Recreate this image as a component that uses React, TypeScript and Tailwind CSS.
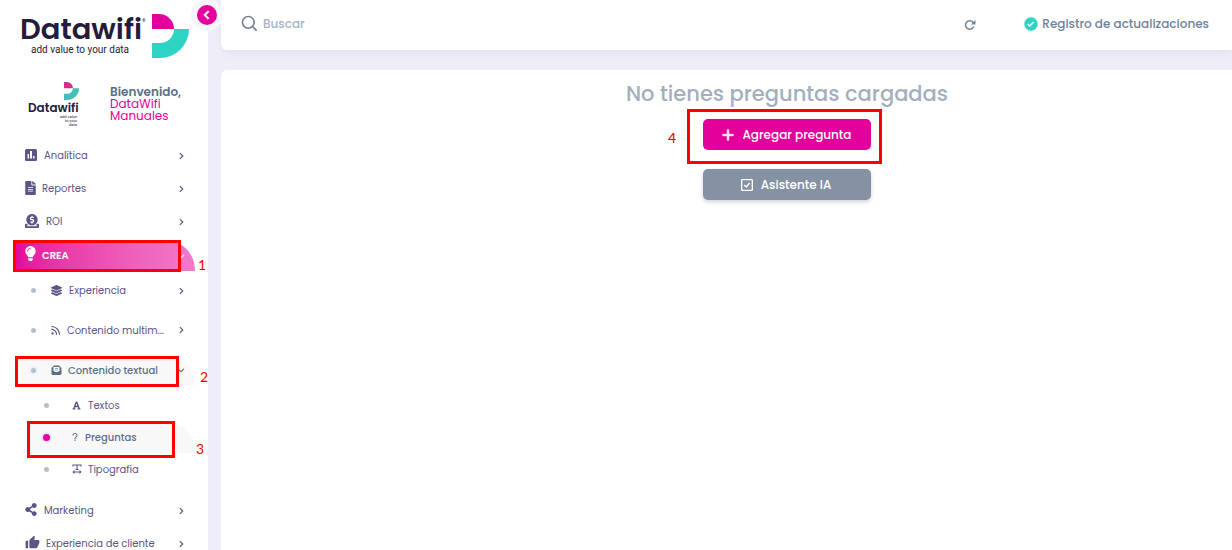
import React, { useState } from "react";
import {
  BiCheckSquare,
  BiChevronDown,
  BiChevronLeft,
  BiChevronRight,
  BiPlus,
  BiQuestionMark,
  BiRss,
  BiSearch,
  BiSolidCheckCircle,
} from "react-icons/bi";
import {
  FaDonate,
  FaFileAlt,
  FaFont,
  FaLayerGroup,
  FaLightbulb,
  FaShareAlt,
} from "react-icons/fa";
import { MdThumbUp } from "react-icons/md";

interface IconProps {
  className?: string;
}

interface NavItem {
  title: string;
  icon: React.ComponentType<IconProps>;
  iconClass: string;
}

const ChartIcon: React.FC<IconProps> = ({ className }) => (
  <svg viewBox="0 0 24 24" className={className} aria-hidden="true">
    <rect width="24" height="24" rx="3" fill="currentColor" />
    <path d="M5 10H8V19H5ZM10 4H14V19H10ZM16 14H19V19H16Z" fill="#fff" />
  </svg>
);

const LetterIcon: React.FC<IconProps> = ({ className }) => (
  <svg viewBox="0 0 22 20" className={className} aria-hidden="true">
    <path d="M1 6L6 1H16L21 6V17A3 3 0 0 1 18 20H4A3 3 0 0 1 1 17Z" fill="currentColor" />
    <path d="M5 4H17V11L14 14H8L5 11Z" fill="#fff" />
    <path d="M8 7H14M8 10H14" stroke="currentColor" strokeWidth="1.2" />
  </svg>
);

const TextWidthIcon: React.FC<IconProps> = ({ className }) => (
  <svg
    viewBox="0 0 20 20"
    className={className}
    fill="none"
    stroke="currentColor"
    strokeWidth="2.2"
    aria-hidden="true"
  >
    <path d="M2 5V2H18V5M10 2V11M7 11H13M2 16H18" />
    <path d="M5 12L1 16L5 20ZM15 12L19 16L15 20Z" fill="currentColor" stroke="none" />
  </svg>
);

const ReloadIcon: React.FC<IconProps> = ({ className }) => (
  <svg viewBox="0 0 24 24" className={className} aria-hidden="true">
    <path
      d="M19.5 15A8.5 8.5 0 1 1 18 6.5L20 9"
      fill="none"
      stroke="currentColor"
      strokeWidth="3"
    />
    <path d="M23 2V11H14Z" fill="currentColor" />
  </svg>
);

const topItems: NavItem[] = [
  { title: "Analítica", icon: ChartIcon, iconClass: "h-3 w-3 mr-[7px]" },
  { title: "Reportes", icon: FaFileAlt, iconClass: "h-3.5 w-[11px] mr-1.5" },
  { title: "ROI", icon: FaDonate, iconClass: "h-3.5 w-3.5 mr-[7px]" },
];

const bottomItems: NavItem[] = [
  { title: "Marketing", icon: FaShareAlt, iconClass: "h-[13px] w-3 mr-[7px]" },
  { title: "Experiencia de cliente", icon: MdThumbUp, iconClass: "h-[15px] w-[15px] mr-1.5" },
];

const BrandMark: React.FC<{ className: string; pink: string; teal: string }> = ({
  className,
  pink,
  teal,
}) => (
  <svg viewBox="0 0 37 44" className={className} aria-hidden="true">
    <path d="M0 0H7A15 15 0 0 1 22 15H0Z" fill={pink} />
    <path d="M22 15H37A29 29 0 0 1 8 44H0V29H8A14 14 0 0 0 22 15Z" fill={teal} />
  </svg>
);

// numbered red frame drawn over a control
const Marker: React.FC<{ n: number; box: string; label: string }> = ({ n, box, label }) => (
  <>
    <span className={`pointer-events-none absolute z-10 border-3 border-[#ff0000] ${box}`} />
    <span
      className={`pointer-events-none absolute z-10 font-[Lato,sans-serif] text-[14px] leading-4 text-[#f00000] ${label}`}
    >
      {n}
    </span>
  </>
);

const TopLink: React.FC<{ item: NavItem }> = ({ item }) => {
  const Icon = item.icon;
  return (
    <li>
      <a href="#" className="flex h-[33px] items-center pr-5 pl-[25px]">
        <Icon className={`mb-0.5 shrink-0 ${item.iconClass}`} />
        <span className="flex-1">{item.title}</span>
        <BiChevronRight size={14} />
      </a>
    </li>
  );
};

const Sidebar: React.FC = () => {
  const [open, setOpen] = useState<boolean>(true);

  return (
    <aside className="relative w-52 shrink-0 bg-white text-[10px] text-[#5d5386]">
      <button
        type="button"
        aria-label="Contraer menú"
        onClick={() => setOpen(!open)}
        className="absolute -top-px -right-[15px] z-20 flex size-8 items-center justify-center rounded-full bg-[#f5f5fb]"
      >
        <span className="flex size-5 items-center justify-center rounded-full bg-[#e4009b] text-white">
          <BiChevronLeft size={18} strokeWidth={1} />
        </span>
      </button>

      <a href="#" className="flex h-[70px] items-start pt-[14px] pl-5">
        <span className="w-[132px] text-[#231c3d]">
          <span className="flex items-start font-[Poppins,Inter,sans-serif] text-[29px] leading-[30px] font-semibold">
            Datawifi
            <span className="pt-1 text-[7px] leading-2 font-normal">®</span>
          </span>
          <span className="block pl-[11px] font-[Roboto,sans-serif] text-[10px] leading-3">
            add value to your data
          </span>
        </span>
        <BrandMark className="h-11 w-[37px]" pink="#e4009b" teal="#2dd4c4" />
      </a>

      <div className="flex h-[69px] items-start pt-3 pl-7">
        <div className="flex w-[82px] flex-col items-start text-[#231c3d]">
          <BrandMark className="ml-9 h-[18px] w-[15px]" pink="#d92d8a" teal="#45bdb9" />
          <span className="mt-[2px] text-[12px] leading-3 font-semibold">Datawifi</span>
          <span className="mt-px w-[49px] text-right font-[Roboto,sans-serif] text-[4px] leading-[4px]">
            add value
            <br />
            to your
            <br />
            data
          </span>
        </div>
        <p className="pt-1 text-[12px] leading-3 text-[#e4009b]">
          <b className="font-semibold text-[#5b7086]">Bienvenido,</b>
          <br />
          DataWifi
          <br />
          Manuales
        </p>
      </div>

      {open && (
        <nav>
          <ul>
            {topItems.map((item) => (
              <TopLink key={item.title} item={item} />
            ))}
            <li>
              <div className="relative mt-0.5">
                <a
                  href="#"
                  className="mr-[13px] ml-[14px] flex h-[31px] items-center rounded-tr-[30px] bg-linear-to-r from-[#e4009b] to-[#f27bcb] pr-[7px] pl-[11px] font-semibold text-white"
                >
                  <FaLightbulb className="mr-1.5 mb-1 h-[15px] w-[11px] shrink-0" />
                  <span className="flex-1">CREA</span>
                  <BiChevronDown size={14} />
                </a>
                <Marker n={1} box="top-0 left-[13px] h-8 w-[168px]" label="top-[17px] left-[198px]" />
              </div>
              <ul>
                <li>
                  <a href="#" className="flex h-[39px] items-center pr-5 pl-[31px]">
                    <span className="mr-[15px] size-[5px] rounded-full bg-[#b4bfca]" />
                    <FaLayerGroup size={11} className="mr-[7px]" />
                    <span className="flex-1">Experiencia</span>
                    <BiChevronRight size={14} />
                  </a>
                </li>
                <li>
                  <a href="#" className="flex h-10 items-center pr-5 pl-[31px]">
                    <span className="mr-[13px] size-[5px] shrink-0 rounded-full bg-[#b4bfca]" />
                    <BiRss size={14} className="mr-1 shrink-0" />
                    <span className="flex-1 whitespace-nowrap">Contenido multim...</span>
                    <BiChevronRight size={14} className="shrink-0" />
                  </a>
                </li>
                <li className="text-[#5b7086]">
                  <div className="relative flex h-10 items-center">
                    <a
                      href="#"
                      className="mr-[13px] ml-4 flex h-[30px] flex-1 items-center rounded-tr-[30px] bg-[#f8f8f8] pr-[7px] pl-[15px]"
                    >
                      <span className="mr-[15px] size-[5px] rounded-full bg-[#b4bfca] ring-2 ring-[#efeffa]" />
                      <LetterIcon className="mr-1.5 h-2.5 w-[11px]" />
                      <span className="flex-1 font-medium">Contenido textual</span>
                      <BiChevronDown size={14} />
                    </a>
                    <Marker n={2} box="top-[6px] left-[15px] h-[31px] w-[164px]" label="top-[19px] left-[200px]" />
                  </div>
                  <ul className="text-[#5d5386]">
                    <li>
                      <a href="#" className="flex h-[31px] items-center pl-11">
                        <span className="mr-[23px] size-[5px] rounded-full bg-[#b4bfca]" />
                        <FaFont size={9} className="mr-[7px]" />
                        Textos
                      </a>
                    </li>
                    <li className="relative">
                      <a
                        href="#"
                        className="mr-[13px] ml-7 flex h-8 items-center rounded-tr-[30px] bg-[#f8f8f8] pl-[15px] text-[#5b7086]"
                      >
                        <span className="mr-[19px] size-[7px] rounded-full bg-[#e4009b] ring-2 ring-[#e9e6fb]" />
                        <BiQuestionMark size={12} className="mr-1" />
                        <span className="font-medium">Preguntas</span>
                      </a>
                      <Marker n={3} box="top-0 left-[27px] h-[37px] w-[148px]" label="top-5 left-[196px]" />
                    </li>
                    <li>
                      <a href="#" className="flex h-8 items-center pl-11">
                        <span className="mr-[23px] size-[5px] rounded-full bg-[#b4bfca]" />
                        <TextWidthIcon className="mr-1.5 size-2.5" />
                        Tipografía
                      </a>
                    </li>
                  </ul>
                </li>
              </ul>
            </li>
          </ul>
          <ul className="mt-[9px]">
            {bottomItems.map((item) => (
              <TopLink key={item.title} item={item} />
            ))}
          </ul>
        </nav>
      )}
    </aside>
  );
};

const Header: React.FC = () => (
  <header className="flex h-[50px] items-center rounded-bl-md bg-white pr-[23px] pb-[3px] pl-[19px] text-[12px] text-[#70829a] shadow-[0_3px_10px_rgba(80,80,140,0.08)]">
    <label htmlFor="search" className="mr-[3px]">
      <BiSearch size={20} aria-label="Buscar" />
    </label>
    <input
      id="search"
      type="text"
      placeholder="Buscar"
      className="min-w-0 flex-1 font-medium outline-none placeholder:text-[#a9b4c2]"
    />
    <button type="button" aria-label="Recargar" className="mr-[47px]">
      <ReloadIcon className="mt-0.5 size-3" />
    </button>
    <a href="#" className="flex items-center gap-[3px] font-medium">
      <BiSolidCheckCircle size={16} className="text-[#2dd4c4]" />
      Registro de actualizaciones
    </a>
  </header>
);

const App: React.FC = () => {
  return (
    <div className="flex h-screen overflow-hidden bg-[#efeef8] font-[Poppins,Inter,sans-serif]">
      <Sidebar />
      <div className="ml-[13px] flex min-w-0 flex-1 flex-col">
        <Header />
        <main className="mt-5 flex flex-1 flex-col items-center rounded-tl-md bg-white pt-2 pl-[121px]">
          <h1 className="text-[21px] leading-8 font-medium text-[#a3afbd]">
            No tienes preguntas cargadas
          </h1>
          <div className="relative mt-[9px] flex w-[168px] flex-col gap-[19px] text-[12px] font-medium text-white">
            <button
              type="button"
              className="flex h-[31px] items-center justify-center gap-1.5 rounded-[5px] bg-[#e4009b] pr-1"
            >
              <BiPlus size={18} strokeWidth={1} />
              Agregar pregunta
            </button>
            <button
              type="button"
              className="flex h-[31px] items-center justify-center gap-1.5 rounded-[5px] bg-[#8592a3] pr-1 shadow-[0_2px_4px_rgba(133,146,163,0.4)]"
            >
              <BiCheckSquare size={16} />
              Asistente IA
            </button>
            <Marker n={4} box="-top-[10px] -left-4 h-[55px] w-[195px]" label="top-[11px] -left-[35px]" />
          </div>
        </main>
      </div>
    </div>
  );
};

export default App;
